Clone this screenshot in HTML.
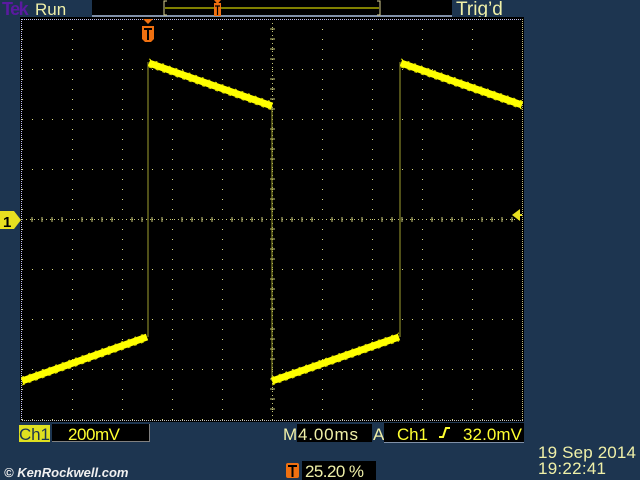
<!DOCTYPE html>
<html><head><meta charset="utf-8"><style>
html,body{margin:0;padding:0;background:#1d3550;width:640px;height:480px;overflow:hidden}
svg{display:block}
text{font-family:"Liberation Sans",sans-serif}
</style></head><body>
<svg width="640" height="480" viewBox="0 0 640 480" xmlns="http://www.w3.org/2000/svg">
<defs>
<pattern id="pv" x="22" y="19" width="50" height="10" patternUnits="userSpaceOnUse"><rect x="0" y="0" width="1" height="1" fill="#d8d880"/></pattern>
<pattern id="ph" x="22" y="19" width="10" height="50" patternUnits="userSpaceOnUse"><rect x="0" y="0" width="1" height="1" fill="#d8d880"/></pattern>
</defs>
<rect width="640" height="480" fill="#1d3550"/>
<text x="2" y="15" font-size="18" font-weight="bold" fill="#5a1aa0" letter-spacing="-1.5">Tek</text>
<text x="35" y="15" font-size="17" fill="#f0f0a8">Run</text>
<rect x="92" y="0" width="360" height="16" fill="#000"/>
<rect x="92" y="15" width="360" height="2" fill="#8090a8"/>
<line x1="165" y1="8" x2="379" y2="8" stroke="#ffff00" stroke-width="1"/>
<path d="M167,1 H164 V15 H167 M377,1 H380 V15 H377" stroke="#d8d090" fill="none"/>
<rect x="214" y="3" width="7" height="13" fill="#f07010"/>
<path d="M214,0 L221,0 L217.5,4 Z" fill="#f07010"/>
<path d="M215,6 H220 M217.5,6 V15" stroke="#000" stroke-width="1.2"/>
<text x="456" y="15" font-size="19" fill="#f0f0a8">Trig’d</text>
<rect x="20" y="17" width="504" height="405" fill="#000"/>
<rect x="22" y="19" width="501" height="402" fill="url(#pv)"/>
<rect x="22" y="19" width="501" height="402" fill="url(#ph)"/>
<line x1="22" y1="19.5" x2="523" y2="19.5" stroke="#c0c0f0" stroke-dasharray="1 1"/>
<line x1="21.5" y1="19" x2="21.5" y2="421" stroke="#c0c0f0" stroke-dasharray="1 1"/>
<line x1="22" y1="420.5" x2="523" y2="420.5" stroke="#c0c0c0" stroke-dasharray="1 1"/>
<line x1="522.5" y1="19" x2="522.5" y2="421" stroke="#c8c080" stroke-dasharray="1 1"/>
<line x1="22" y1="219.5" x2="523" y2="219.5" stroke="#c8c878" stroke-dasharray="1 3"/>
<line x1="272.5" y1="19" x2="272.5" y2="421" stroke="#c8c878" stroke-dasharray="1 3"/>
<g stroke="#c8c878">
<path d="M32,217 v5 M42,217 v5 M52,217 v5 M62,217 v5 M82,217 v5 M92,217 v5 M102,217 v5 M112,217 v5 M132,217 v5 M142,217 v5 M152,217 v5 M162,217 v5 M182,217 v5 M192,217 v5 M202,217 v5 M212,217 v5 M232,217 v5 M242,217 v5 M252,217 v5 M262,217 v5 M282,217 v5 M292,217 v5 M302,217 v5 M312,217 v5 M332,217 v5 M342,217 v5 M352,217 v5 M362,217 v5 M382,217 v5 M392,217 v5 M402,217 v5 M412,217 v5 M432,217 v5 M442,217 v5 M452,217 v5 M462,217 v5 M482,217 v5 M492,217 v5 M502,217 v5 M512,217 v5"/>
<path d="M270,29 h5 M270,39 h5 M270,49 h5 M270,59 h5 M270,79 h5 M270,89 h5 M270,99 h5 M270,109 h5 M270,129 h5 M270,139 h5 M270,149 h5 M270,159 h5 M270,179 h5 M270,189 h5 M270,199 h5 M270,209 h5 M270,229 h5 M270,239 h5 M270,249 h5 M270,259 h5 M270,279 h5 M270,289 h5 M270,299 h5 M270,309 h5 M270,329 h5 M270,339 h5 M270,349 h5 M270,359 h5 M270,379 h5 M270,389 h5 M270,399 h5 M270,409 h5"/>
</g>
<g fill="none">
<path d="M148,337 V62 M272,106 V381 M400,337 V62" stroke="#a0a030" stroke-width="1"/>
<path d="M22,381 L147,337 M149,63 L272,106 M272,381 L399,337 M401,63 L522,105" stroke="#ffff00" stroke-width="7"/>
<path d="M22,377 L147,333 M149,59 L272,102 M272,377 L399,333 M401,59 L522,101" stroke="#d8d800" stroke-width="1" stroke-dasharray="2 5"/>
<path d="M22,385 L147,341 M149,67 L272,110 M272,385 L399,341 M401,67 L522,109" stroke="#d8d800" stroke-width="1" stroke-dasharray="3 4"/>
</g>
<path d="M143,19 L153,19 L148,24 Z" fill="#f07010"/>
<path d="M142,26 H154 V39 L151,42 H145 L142,39 Z" fill="#f07010"/>
<path d="M144,29 H152 M148,29 V40" stroke="#000" stroke-width="2"/>
<path d="M0,211 H14 L21,220 L14,229 H0 Z" fill="#e8e020"/>
<text x="3" y="227" font-size="15" font-weight="bold" fill="#000">1</text>
<path d="M512,215 L520,209 V221 Z" fill="#e8e020"/>
<line x1="516" y1="215" x2="522" y2="215" stroke="#e8e020" stroke-width="2"/>
<rect x="19" y="425" width="31" height="17" fill="#e0e020"/>
<text x="19" y="440" font-size="17" fill="#1d3550" textLength="31">Ch1</text>
<rect x="52" y="424" width="98" height="18" fill="#000"/>
<rect x="52" y="441" width="98" height="1" fill="#808080"/>
<rect x="149" y="424" width="1" height="18" fill="#808080"/>
<text x="68" y="440" font-size="17" fill="#ffff30" textLength="52">200mV</text>
<text x="283" y="440" font-size="17" fill="#f0f0a8">M</text>
<rect x="297" y="424" width="75" height="18" fill="#000"/>
<text x="298" y="440" font-size="17" fill="#f0f0a8" textLength="60">4.00ms</text>
<text x="373" y="440" font-size="17" fill="#f0f0a8">A</text>
<rect x="384" y="423" width="140" height="20" fill="#000"/>
<rect x="384" y="442" width="140" height="1" fill="#8090a8"/>
<text x="397" y="440" font-size="17" fill="#ffff30" textLength="31">Ch1</text>
<path d="M439,437 H443 L446,428 H450" stroke="#ffff30" stroke-width="2" fill="none"/>
<text x="463" y="440" font-size="17" fill="#ffff30" textLength="59">32.0mV</text>
<text x="538" y="458" font-size="17" fill="#f0f0a8" textLength="98">19 Sep  2014</text>
<text x="538" y="474" font-size="17" fill="#f0f0a8" textLength="68">19:22:41</text>
<rect x="286" y="463" width="13" height="15" rx="2" fill="#f07010"/>
<path d="M288,466 H297 M292.5,466 V477" stroke="#000" stroke-width="2"/>
<rect x="302" y="461" width="74" height="19" fill="#000"/>
<text x="305" y="477" font-size="17" fill="#f0f0a8" textLength="59">25.20 %</text>
<text x="4" y="477" font-size="13" font-weight="bold" font-style="italic" fill="#f0f0f0">© KenRockwell.com</text>
</svg>
</body></html>
